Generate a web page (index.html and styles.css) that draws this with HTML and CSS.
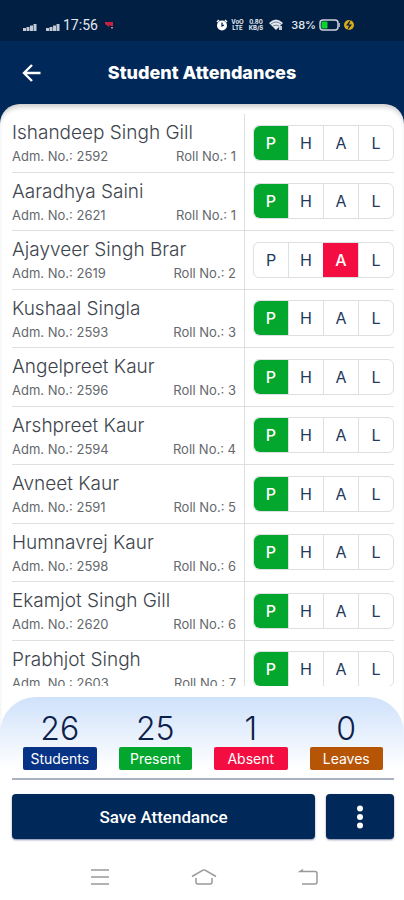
FILE: index.html
```html
<!DOCTYPE html>
<html lang="en">
<head>
    <meta charset="utf-8">
    <meta name="viewport" content="width=device-width, initial-scale=1">
    <title>Student Attendances</title>
    <link rel="stylesheet" href="styles.css">
</head>
<body>
    <div class="app">
        <div class="status-bar">
            <svg class="signal" viewBox="0 0 14 8"><path d="M0 8V5h3v3zM3.500 8V4h3v4zM7 8V2.500h3V8zM10.500 8V1h3v7z"/></svg>
            <svg class="signal second" viewBox="0 0 14 8"><path d="M0 8V5h3v3zM3.500 8V4h3v4zM7 8V2.500h3V8zM10.500 8V1h3v7z"/></svg>
            <span class="clock">17:56</span>
            <svg class="notice" viewBox="0 0 9 8"><path fill="#c5233f" d="M0 1h8v4H6L4.500 4 4 6 2 4.500 0 3z"/><path fill="#c88" d="M6 6h2v1.500H6z"/></svg>
            <div class="status-right">
                <svg class="alarm" viewBox="0 0 12 12"><circle cx="6" cy="6.500" r="5" fill="#fff"/><path d="M1 3l2-2M11 3L9 1" stroke="#fff" stroke-width="1.500"/><path d="M6 3.500V7l2-1" fill="none" stroke="#001f43" stroke-width="1.200"/></svg>
                <span class="tiny">VoO<br>LTE</span>
                <span class="tiny rate">0.80<br>KB/S</span>
                <svg class="wifi" viewBox="0 0 14 11"><path d="M0 4Q7-3 14 4L7 11z" fill="#e3e7ee"/><path d="M2 5q5-4 10 0M4 7q3-2 6 0" fill="none" stroke="#001f43" stroke-width=".5"/><path d="M10 7h3v4h-3z" fill="#c3cad5"/></svg>
                <span class="percent">38%</span>
                <svg class="battery" viewBox="0 0 21 12"><rect x="1" y="1" width="18" height="10" rx="3" fill="none" stroke="#cbd2dd" stroke-width="1.500"/><rect x="2.500" y="2.500" width="6" height="7" rx="1" fill="#0bd32c"/><path d="M20.300 4v4" stroke="#cbd2dd"/></svg>
                <svg class="bolt" viewBox="0 0 12 12"><circle cx="6" cy="6" r="5" fill="#d9ab16"/><path d="M8 0L3 6.500h3L4 12 9 5.500H6z" fill="#001f43"/></svg>
            </div>
        </div>

        <header class="header">
            <button type="button" class="back-btn" aria-label="Back">
                <svg viewBox="0 0 20 20"><path d="M18.500 10H2.500M10 2L2 10l8 8" fill="none" stroke="#fff" stroke-width="2.400"/></svg>
            </button>
            <h1>Student Attendances</h1>
        </header>

        <main class="panel">
            <div class="student-list" id="students"></div>

            <section class="summary">
                <div class="counts">
                    <div class="count"><strong>26</strong><span class="tag students">Students</span></div>
                    <div class="count"><strong>25</strong><span class="tag present">Present</span></div>
                    <div class="count"><strong>1</strong><span class="tag absent">Absent</span></div>
                    <div class="count"><strong>0</strong><span class="tag leaves">Leaves</span></div>
                </div>
                <div class="actions">
                    <button type="button" class="save-btn">Save Attendance</button>
                    <button type="button" class="more-btn" aria-label="More options">
                        <svg viewBox="0 0 8 24"><circle cx="4" cy="3.500" r="3"/><circle cx="4" cy="12" r="3"/><circle cx="4" cy="20.500" r="3"/></svg>
                    </button>
                </div>
            </section>
        </main>

        <nav class="nav-bar">
            <button type="button" aria-label="Recent apps"><svg viewBox="0 0 26 18"><path d="M4 2h18M4 9h18M4 16h18"/></svg></button>
            <button type="button" aria-label="Home"><svg viewBox="0 0 26 18"><path d="M1 8.500L12 2.200q1-.6 2 0L25 8.500M5 10v4q0 2 2 2h12q2 0 2-2v-4"/></svg></button>
            <button type="button" aria-label="Back"><svg viewBox="0 0 26 18"><path d="M8 1.500L5 3.500H20q2 0 2 2V14q0 2-2 2H7"/></svg></button>
        </nav>
    </div>
    <script src="script.js"></script>
</body>
</html>
```
FILE: styles.css
```css
* {
    box-sizing: border-box;
}
body {
    margin: 0;
    font-family: Inter, "Work Sans", sans-serif;
    background-color: #fff;
    color: #3d444d;
}
button {
    border: none;
    padding: 0;
    cursor: pointer;
    font-family: inherit;
}
svg {
    display: block;
}
.app {
    display: flex;
    flex-direction: column;
    height: 100vh;
    background-color: #002859;
}

/* status bar */
.status-bar {
    display: flex;
    align-items: center;
    flex: none;
    height: 41px;
    padding: 8px 49px 0 23px;
    background-color: #001f43;
    color: #e6eaf0;
}
.signal {
    width: 14px;
    height: 8px;
    margin-top: 4px;
    fill: #c3cad5;
}
.second {
    margin-left: 9px;
}
.clock {
    margin-left: 3px;
    font-family: Roboto, sans-serif;
    font-size: 14px;
}
.notice {
    width: 9px;
    height: 8px;
    margin-left: 7px;
}
.status-right {
    display: flex;
    align-items: center;
    margin-left: auto;
}
.alarm {
    width: 12px;
    height: 12px;
}
.tiny {
    margin-left: 3px;
    font-size: 6px;
    font-weight: 700;
    line-height: 6px;
    text-align: center;
}
.rate {
    margin-left: 5px;
}
.wifi {
    width: 14px;
    height: 11px;
    margin-left: 6px;
}
.percent {
    margin-left: 8px;
    font-size: 11px;
    font-weight: 500;
}
.battery {
    width: 21px;
    height: 12px;
    margin-left: 3px;
}
.bolt {
    width: 12px;
    height: 12px;
    margin-left: 3px;
}

/* header */
.header {
    display: grid;
    grid-template-columns: 48px 1fr 48px;
    align-items: center;
    flex: none;
    height: 63px;
    padding: 0 8px;
}
.back-btn {
    display: flex;
    align-items: center;
    justify-content: center;
    height: 48px;
    background: none;
}
.back-btn svg {
    width: 20px;
    height: 20px;
}
.header h1 {
    margin: 0;
    color: #fff;
    font-size: 18px;
    font-weight: 800;
    text-align: center;
}

/* list */
.panel {
    display: flex;
    flex: 1;
    flex-direction: column;
    min-height: 0;
    padding-top: 10px;
    border-radius: 20px 20px 0 0;
    background-color: #fff;
    box-shadow: inset 0 5px 5px -2px rgba(0, 0, 0, 0.2);
}
.student-list {
    flex: 1;
    min-height: 0;
    margin: 0 10px 11px 12px;
    overflow-y: auto;
    scrollbar-width: none;
}
.student {
    display: flex;
    height: 6.5vh;
    min-height: 56px;
    border-bottom: 1px solid #dedfe1;
}
.info {
    display: flex;
    flex: 1;
    flex-direction: column;
    justify-content: center;
    gap: 3px;
    padding-right: 8px;
    border-right: 1px solid #dedfe1;
}
.name {
    font-size: 19px;
    font-weight: 300;
    line-height: 24px;
}
.numbers {
    display: flex;
    justify-content: space-between;
    color: #64686d;
    font-size: 13px;
    line-height: 16px;
}
.marks {
    display: flex;
    align-self: center;
    width: 141px;
    height: 36px;
    margin: 0 0 0 8px;
    padding: 0;
    overflow: hidden;
    border: 1px solid #dedfe1;
    border-radius: 6px;
}
.marks label {
    position: relative;
    display: flex;
    flex: 1;
}
.marks label + label {
    border-left: 1px solid #dedfe1;
}
.marks input {
    position: absolute;
    inset: 0;
    margin: 0;
    opacity: 0;
    cursor: pointer;
}
.marks span {
    display: flex;
    flex: 1;
    align-items: center;
    justify-content: center;
    color: #23395b;
    font-size: 16px;
}
.marks input:checked + span {
    margin: -1px;
    background-color: #04a72d;
    color: #fff;
    font-weight: 500;
}
.marks input[value="A"]:checked + span {
    background-color: #f30d40;
}

/* totals and buttons */
.summary {
    flex: none;
    padding: 14px 10px 11px 12px;
    border-radius: 36px 36px 0 0;
    background: linear-gradient(#cfe1fb, #fff 72px);
}
.counts {
    display: grid;
    grid-template-columns: repeat(4, 1fr);
    padding-bottom: 8px;
    border-bottom: 2px solid #a9b0c0;
}
.count {
    text-align: center;
}
.count strong {
    display: block;
    color: #0c2049;
    font-size: 32px;
    font-weight: 300;
    line-height: 36px;
}
.tag {
    display: block;
    height: 23px;
    margin: 0 11px;
    border-radius: 2px;
    color: #fff;
    font-size: 14px;
    line-height: 23px;
}
.students {
    background-color: #063386;
}
.present {
    background-color: #04a72d;
}
.absent {
    background-color: #f30d40;
}
.leaves {
    background-color: #b75507;
}
.actions {
    display: flex;
    gap: 11px;
    margin-top: 14px;
}
.save-btn, .more-btn {
    height: 45px;
    border-radius: 4px;
    background-color: #002859;
    box-shadow: 0 1px 2px rgba(0, 20, 90, 0.5);
    color: #fff;
}
.save-btn {
    flex: 1;
    font-family: Roboto, sans-serif;
    font-size: 17px;
    font-weight: 500;
}
.more-btn {
    display: flex;
    align-items: center;
    justify-content: center;
    width: 68px;
}
.more-btn svg {
    width: 8px;
    height: 24px;
    fill: #fff;
}

/* phone navigation */
.nav-bar {
    display: flex;
    flex: none;
    justify-content: center;
    gap: 78px;
    padding: 18px 0 14px 4px;
    background-color: #fff;
}
.nav-bar button {
    background: none;
}
.nav-bar svg {
    width: 26px;
    height: 18px;
    fill: none;
    stroke: #999;
    stroke-width: 1.5;
}
```
FILE: script.js
```js
const students = [
    ['Ishandeep Singh Gill', 2592, 1, 'P'],
    ['Aaradhya Saini', 2621, 1, 'P'],
    ['Ajayveer Singh Brar', 2619, 2, 'A'],
    ['Kushaal Singla', 2593, 3, 'P'],
    ['Angelpreet Kaur', 2596, 3, 'P'],
    ['Arshpreet Kaur', 2594, 4, 'P'],
    ['Avneet Kaur', 2591, 5, 'P'],
    ['Humnavrej Kaur', 2598, 6, 'P'],
    ['Ekamjot Singh Gill', 2620, 6, 'P'],
    ['Prabhjot Singh', 2603, 7, 'P']
];

const list = document.getElementById('students');
students.forEach(([name, adm, roll, mark]) => {
    const row = document.createElement('div');
    row.classList.add('student');
    const options = ['P', 'H', 'A', 'L'].map(m => `
        <label><input type="radio" name="mark-${adm}" value="${m}" ${m === mark ? 'checked' : ''}><span>${m}</span></label>
    `).join('');
    row.innerHTML = `
        <div class="info">
            <div class="name">${name}</div>
            <div class="numbers"><span>Adm. No.: ${adm}</span><span>Roll No.: ${roll}</span></div>
        </div>
        <fieldset class="marks" aria-label="${name}">${options}</fieldset>
    `;
    list.appendChild(row);
});
```
